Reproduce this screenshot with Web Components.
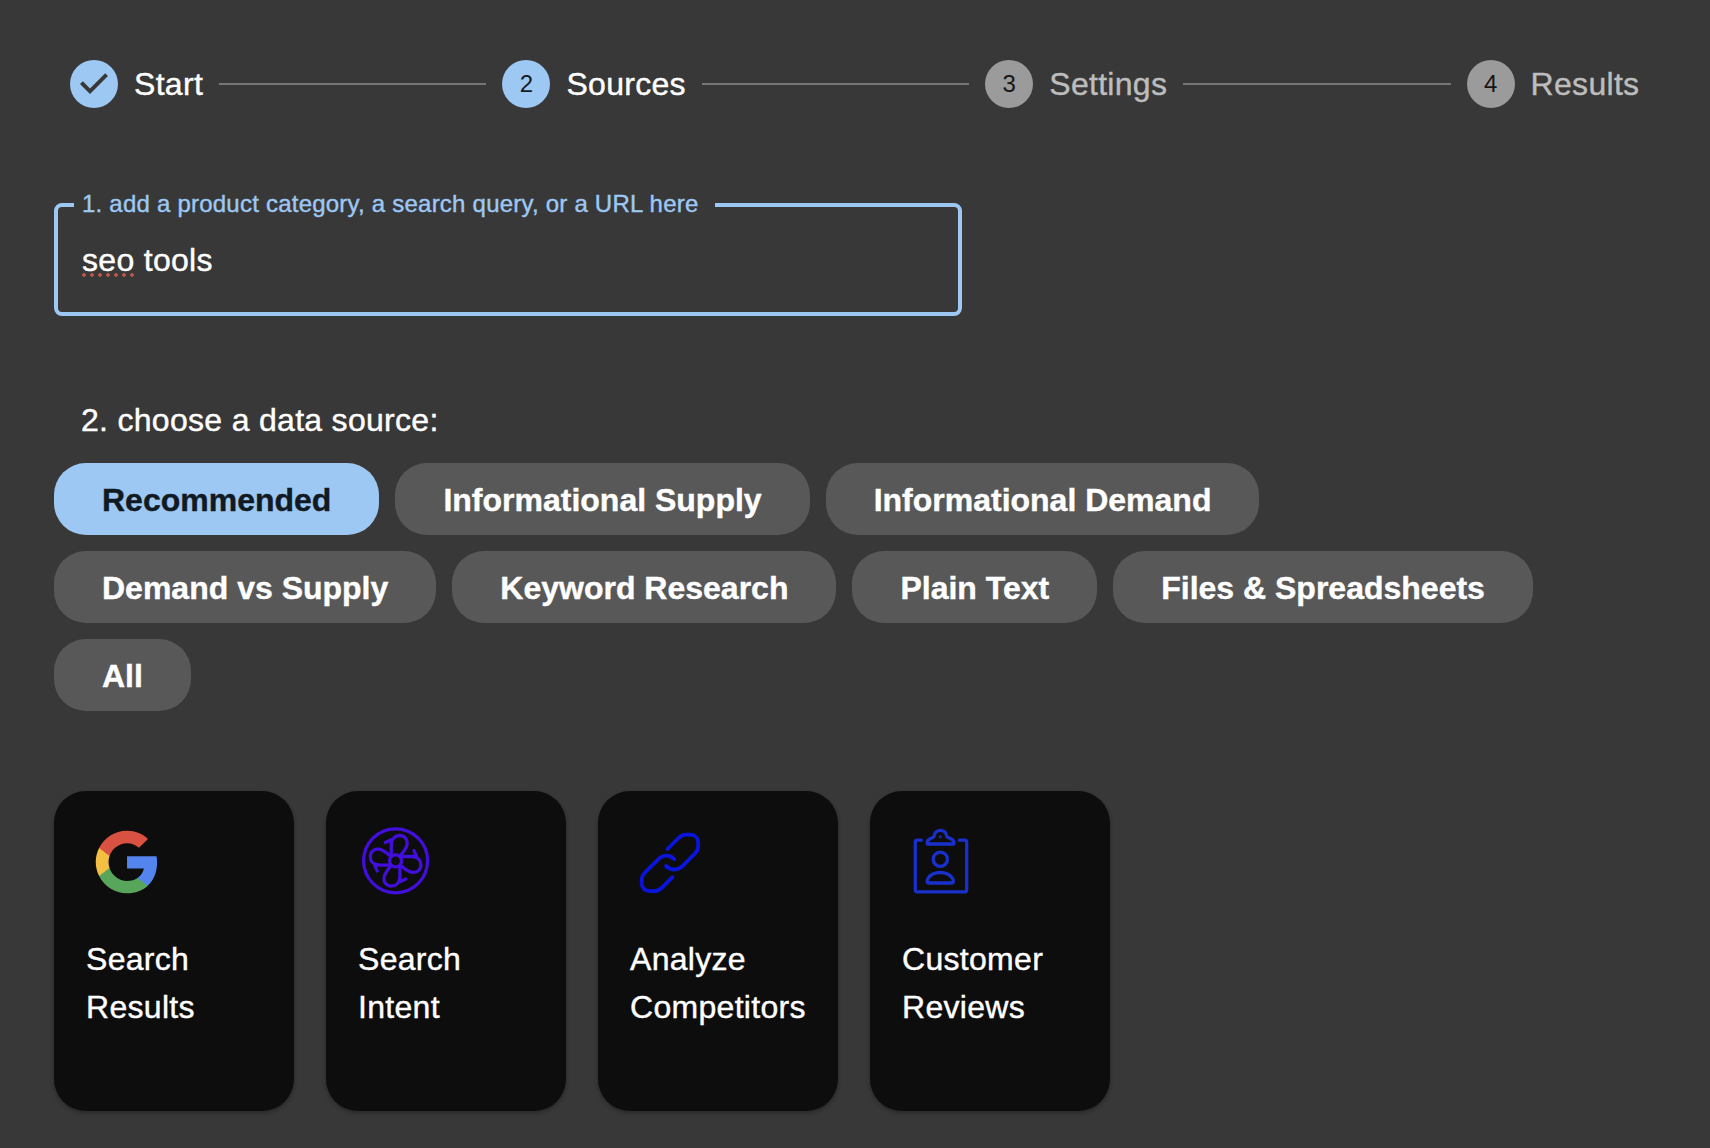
<!DOCTYPE html>
<html lang="en">
<head>
<meta charset="utf-8">
<title>Sources</title>
<style>
  body {
    margin: 0;
    min-height: 1148px;
    background: #383838;
    color: #fff;
    font: 32px/48px "Liberation Sans", Arial, sans-serif;
    letter-spacing: 0.3px;
    -webkit-text-stroke: 0.4px;
  }
</style>
</head>
<body>
<source-page>
  <step-bar slot="steps">
    <step-item state="done" number="1">Start</step-item>
    <step-item state="active" number="2">Sources</step-item>
    <step-item number="3">Settings</step-item>
    <step-item number="4">Results</step-item>
  </step-bar>
  <query-field label="1. add a product category, a search query, or a URL here" misspelled="seo">tools</query-field>
  <source-filter label="2. choose a data source:">
    <filter-chip selected>Recommended</filter-chip>
    <filter-chip>Informational Supply</filter-chip>
    <filter-chip>Informational Demand</filter-chip>
    <filter-chip>Demand vs Supply</filter-chip>
    <filter-chip>Keyword Research</filter-chip>
    <filter-chip>Plain Text</filter-chip>
    <filter-chip>Files &amp; Spreadsheets</filter-chip>
    <filter-chip>All</filter-chip>
  </source-filter>
  <card-list>
    <source-card icon="google">Search Results</source-card>
    <source-card icon="fan">Search Intent</source-card>
    <source-card icon="link">Analyze Competitors</source-card>
    <source-card icon="clipboard">Customer Reviews</source-card>
  </card-list>
</source-page>

<script>
const petal = `<path d="M-10.3-18.3-4.3-21V-4.5M-4.3-16C-4-22-.5-25.3 4-25.3 9-25.3 12-21.5 11.6-17 11.3-13 8-9 4.6-5"/>`;

const icons = {
  google: `
    <g transform="translate(6.9 4.9) scale(2.845)">
      <path fill="#5484ed" d="M22.56 12.25c0-.78-.07-1.53-.2-2.25H12v4.26h5.92c-.26 1.37-1.04 2.53-2.21 3.31v2.77h3.57c2.08-1.92 3.28-4.74 3.28-8.09z"/>
      <path fill="#58a65c" d="M12 23c2.97 0 5.46-.98 7.28-2.66l-3.57-2.77c-.98.66-2.23 1.06-3.71 1.06-2.86 0-5.29-1.93-6.16-4.53H2.18v2.84C3.99 20.53 7.7 23 12 23z"/>
      <path fill="#f3c043" d="M5.84 14.09c-.22-.66-.35-1.36-.35-2.09s.13-1.43.35-2.09V7.07H2.18C1.43 8.55 1 10.22 1 12s.43 3.45 1.18 4.93l3.66-2.84z"/>
      <path fill="#d95140" d="M12 5.38c1.62 0 3.06.56 4.21 1.64l3.15-3.15C17.45 2.09 14.97 1 12 1 7.7 1 3.99 3.47 2.18 7.07l3.66 2.84c.87-2.6 3.3-4.53 6.16-4.53z"/>
    </g>`,
  fan: `
    <g transform="translate(37.6 37.8)" fill="none" stroke="#420edb" stroke-width="3.3" stroke-linecap="round" stroke-linejoin="round">
      <circle r="32"/>
      <circle r="6"/>
      ${[0, 90, 180, 270].map(a => `<g transform="rotate(${a})">${petal}</g>`).join("")}
    </g>`,
  link: `
    <g fill="none" stroke="#0a14dc" stroke-width="3.8" stroke-linecap="round" stroke-linejoin="round">
      <path d="M37.5 26 48.5 15Q52 11.7 56 11.7H60C65 11.7 68.2 15 68.2 20V23Q68.2 27.5 65 30.5L53 42.7C48 47.7 41 47.7 36 43"/>
      <path d="M42.5 54.2 31.3 65.3Q28 68.2 24 68.2H20C15 68.2 11.7 65 11.7 60V57Q11.7 52.7 15 49.5L27.5 37.2C32.5 31.5 39.5 31.2 44.3 36.2"/>
    </g>`,
  clipboard: `
    <g transform="translate(-5)" fill="none" stroke="#1930cc" stroke-width="3.3" stroke-linecap="round" stroke-linejoin="round">
      <path d="M24.3 17.2H20.3Q18.3 17.2 18.3 19.2V66.8Q18.3 68.8 20.3 68.8H67.7Q69.7 68.8 69.7 66.8V19.2Q69.7 17.2 67.7 17.2H62.5"/>
      <path d="M30.3 21V19C30.3 15.5 36 15.5 37 13.5 38 5.2 48.8 5.2 49.8 13.5 51.3 15.5 56.8 15.5 56.8 19V21Z"/>
      <circle cx="43.3" cy="13.8" r=".5" stroke-width="2"/>
      <circle cx="43.3" cy="36.2" r="7.1"/>
      <path d="M32 60C29.5 60 30 57 31 55.5 36 47.5 50.5 47.5 55.5 55.5 56.7 57 57 60 54.5 60Z"/>
    </g>`,
};

customElements.define("source-page", class extends HTMLElement {
  constructor() {
    super();
    this.attachShadow({ mode: "open" });
    this.shadowRoot.innerHTML = `
      <style>
        :host {
          display: block;
          box-sizing: border-box;
          min-height: 1148px;
          padding: 60px 54px 0;
        }
      </style>
      <slot name="steps"></slot>
      <slot></slot>
    `;
  }
});

customElements.define("step-bar", class extends HTMLElement {
  constructor() {
    super();
    this.attachShadow({ mode: "open" });
    this.shadowRoot.innerHTML = `
      <style>
        :host {
          display: flex;
          align-items: center;
          height: 48px;
          margin-right: 0.6px;
        }
      </style>
      <slot></slot>
    `;
  }
});

customElements.define("step-item", class extends HTMLElement {
  constructor() {
    super();
    this.attachShadow({ mode: "open" });
  }

  connectedCallback() {
    const done = this.getAttribute("state") === "done";
    this.shadowRoot.innerHTML = `
      <style>
        :host {
          display: flex;
          flex: 1 1 auto;
          align-items: center;
          padding-left: 16px;
          color: #bdbdbd;
        }
        :host([state]) {
          color: #fff;
        }
        :host(:last-child) {
          flex: none;
          padding-right: 16px;
        }
        .badge {
          display: flex;
          align-items: center;
          justify-content: center;
          width: 48px;
          height: 48px;
          margin-right: 16px;
          border-radius: 50%;
          background: #9b9b9b;
          color: #161616;
          font-size: 24px;
          letter-spacing: 0;
          -webkit-text-stroke: 0;
        }
        :host([state]) .badge {
          background: #9dc8f4;
          color: #141a20;
        }
        .line {
          flex: 1;
          height: 2px;
          margin-left: 16px;
          background: #757575;
        }
        :host(:last-child) .line {
          display: none;
        }
      </style>
      <span class="badge">${done
        ? `<svg width="48" height="48" viewBox="0 0 24 24"><path fill="#383838" d="M10 17l-5-5 1.4-1.4 3.6 3.6 7.6-7.6L19 8l-9 9z"/></svg>`
        : this.getAttribute("number")}</span>
      <slot></slot>
      <span class="line"></span>
    `;
  }
});

customElements.define("query-field", class extends HTMLElement {
  constructor() {
    super();
    this.attachShadow({ mode: "open" });
  }

  connectedCallback() {
    this.shadowRoot.innerHTML = `
      <style>
        :host {
          display: block;
          margin-top: 85px;
        }
        fieldset {
          box-sizing: border-box;
          width: 908px;
          height: 123px;
          margin: 0;
          padding: 19px 24px 0 16px;
          border: 4px solid #9dc8f4;
          border-radius: 8px;
        }
        legend {
          height: 24px;
          padding: 0 16px 0 8px;
          color: #9dc8f4;
          font-size: 24px;
          line-height: 22px;
          letter-spacing: 0.225px;
        }
        .value {
          padding-left: 8px;
        }
        .misspelled {
          background: radial-gradient(circle at 2px 2px, #b0544c 1.6px, transparent 2.2px) 0 31px / 8px 4px repeat-x;
        }
      </style>
      <fieldset>
        <legend>${this.getAttribute("label")}</legend>
        <div class="value"><span class="misspelled">${this.getAttribute("misspelled")}</span> <slot></slot></div>
      </fieldset>
    `;
  }
});

customElements.define("source-filter", class extends HTMLElement {
  constructor() {
    super();
    this.attachShadow({ mode: "open" });
  }

  connectedCallback() {
    this.shadowRoot.innerHTML = `
      <style>
        :host {
          display: block;
          margin-top: 80px;
        }
        .label {
          padding: 0 27px;
        }
        .chips {
          display: flex;
          flex-wrap: wrap;
          gap: 16px;
          margin-top: 19px;
          padding-right: 16px;
        }
      </style>
      <div class="label">${this.getAttribute("label")}</div>
      <div class="chips"><slot></slot></div>
    `;
  }
});

customElements.define("filter-chip", class extends HTMLElement {
  constructor() {
    super();
    this.attachShadow({ mode: "open" });
    this.shadowRoot.innerHTML = `
      <style>
        :host {
          display: block;
          padding: 13px 48px 11px;
          border-radius: 32px;
          background: #585858;
          font-weight: 700;
          letter-spacing: 0;
          white-space: nowrap;
        }
        :host([selected]) {
          background: #9dc8f4;
          color: #111a22;
        }
      </style>
      <slot></slot>
    `;
  }
});

customElements.define("card-list", class extends HTMLElement {
  constructor() {
    super();
    this.attachShadow({ mode: "open" });
    this.shadowRoot.innerHTML = `
      <style>
        :host {
          display: flex;
          gap: 32px;
          margin-top: 80px;
        }
      </style>
      <slot></slot>
    `;
  }
});

customElements.define("source-card", class extends HTMLElement {
  constructor() {
    super();
    this.attachShadow({ mode: "open" });
  }

  connectedCallback() {
    this.shadowRoot.innerHTML = `
      <style>
        :host {
          display: block;
          box-sizing: border-box;
          width: 240px;
          height: 320px;
          padding: 32px;
          border-radius: 32px;
          background: #0d0d0d;
          box-shadow: 0 2px 4px rgba(0, 0, 0, 0.3);
        }
        svg {
          display: block;
          margin-bottom: 32px;
        }
        .name {
          width: min-content;
        }
      </style>
      <svg width="80" height="80" viewBox="0 0 80 80">${icons[this.getAttribute("icon")]}</svg>
      <div class="name"><slot></slot></div>
    `;
  }
});
</script>
</body>
</html>
